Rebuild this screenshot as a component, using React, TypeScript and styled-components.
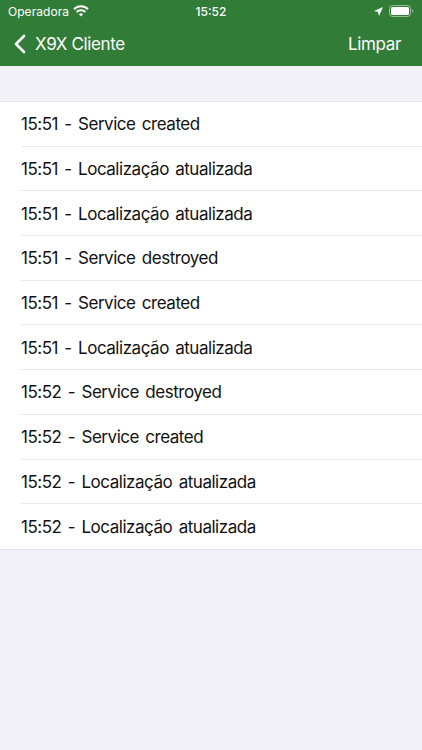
import React from "react";
import styled, { createGlobalStyle } from "styled-components";

const GlobalStyle = createGlobalStyle`
	html, body {
		margin: 0;
		padding: 0;
		background: #f1f1f7;
		font-family: Inter, "Liberation Sans", sans-serif;
	}
`;

const Page = styled.div`
	width: 422px;
	height: 750px;
	overflow: hidden;
	display: flex;
	flex-direction: column;
`;

const Header = styled.header`
	background: #317c37;
	color: #fff;
	height: 66px;
	display: flex;
	flex-direction: column;
`;

const StatusBar = styled.div`
	height: 22px;
	padding: 0 8px;
	display: grid;
	grid-template-columns: 1fr auto 1fr;
	align-items: center;
	font-size: 12px;
	font-weight: 400;
`;

const StatusLeft = styled.div`
	display: flex;
	align-items: center;
	gap: 4px;
	letter-spacing: 0.05px;
`;

const Clock = styled.div`
	font-weight: 500;
`;

const StatusRight = styled.div`
	display: flex;
	align-items: center;
	justify-content: flex-end;
	gap: 6px;
	padding-right: 1px;
`;

const NavBar = styled.div`
	flex: 1;
	display: flex;
	align-items: center;
	justify-content: space-between;
	padding: 0 21px 0 14px;
	font-size: 17px;
	letter-spacing: -0.36px;
`;

const BackLink = styled.div`
	display: flex;
	align-items: center;
	gap: 9px;
`;

const Spacer = styled.div`
	height: 35px;
`;

const List = styled.ul`
	margin: 0;
	padding: 0 0 0 21px;
	list-style: none;
	background: #fff;
	border-top: 1px solid #e6e6ea;
	border-bottom: 1px solid #dfdfe4;
`;

const Row = styled.li`
	box-sizing: border-box;
	height: 44.7px;
	padding-top: 1px;
	display: flex;
	align-items: center;
	font-size: 17px;
	letter-spacing: -0.47px;
	word-spacing: 2px;
	color: #111;
	border-bottom: 1px solid #e8e8ea;
	&:last-child {
		border-bottom: none;
	}
`;

const entries = [
	"15:51 - Service created",
	"15:51 - Localização atualizada",
	"15:51 - Localização atualizada",
	"15:51 - Service destroyed",
	"15:51 - Service created",
	"15:51 - Localização atualizada",
	"15:52 - Service destroyed",
	"15:52 - Service created",
	"15:52 - Localização atualizada",
	"15:52 - Localização atualizada",
];

function App() {
	return (
		<Page>
			<GlobalStyle />
			<Header>
				<StatusBar>
					<StatusLeft>
						<span>Operadora</span>
						<svg width="16" height="12" viewBox="0 0 16 12" fill="none" stroke="#fff" strokeWidth="2">
							<path d="M1 4.2a10 10 0 0 1 14 0" />
							<path d="M3.6 6.9a6.4 6.4 0 0 1 8.8 0" />
							<path d="M8 11.5 5.9 9.3a3 3 0 0 1 4.2 0z" fill="#fff" stroke="none" />
						</svg>
					</StatusLeft>
					<Clock>15:52</Clock>
					<StatusRight>
						<svg width="9" height="9" viewBox="0 0 9 9" fill="#fff">
							<path d="M9 0 5 9 4 5 0 4z" />
						</svg>
						<svg width="24" height="12" viewBox="0 0 24 12" fill="none">
							<rect x="0.5" y="0.5" width="21" height="11" rx="3" stroke="#fff" strokeOpacity="0.5" />
							<rect x="2" y="2" width="18" height="8" rx="1.5" fill="#fff" />
							<path d="M23 4v4c.7-.3 1-1.200 1-2s-.3-1.700-1-2z" fill="#fff" fillOpacity="0.5" />
						</svg>
					</StatusRight>
				</StatusBar>
				<NavBar>
					<BackLink>
						<svg width="12" height="20" viewBox="0 0 12 20" fill="none" stroke="#fff" strokeWidth="2.600" strokeLinecap="round" strokeLinejoin="round">
							<path d="M10 2 2 10l8 8" />
						</svg>
						<span>X9X Cliente</span>
					</BackLink>
					<span>Limpar</span>
				</NavBar>
			</Header>
			<Spacer />
			<List>
				{entries.map((entry, i) => (
					<Row key={i}>{entry}</Row>
				))}
			</List>
		</Page>
	);
}

export default App;
